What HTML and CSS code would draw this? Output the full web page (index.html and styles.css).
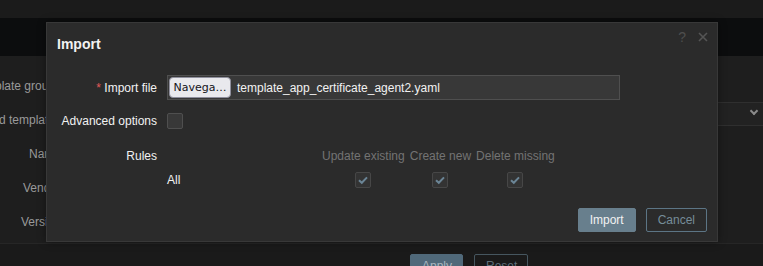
FILE: index.html
```html
<!DOCTYPE html>
<html lang="pt">
<head>
  <meta charset="UTF-8" />
  <title>Templates – Import</title>
  <link rel="stylesheet" href="styles.css">
</head>
<body>

  <div class="topbar"></div>
  <div class="navbar"></div>

  <!-- formulario do template (fica atras do dialogo) -->
  <main class="page">
    <div class="row"><label>Template groups</label><div class="field"></div></div>
    <div class="row"><label>Linked templates</label><div class="field"><div class="select"><span class="chevron"></span></div></div></div>
    <div class="row"><label>Name</label><div class="field"></div></div>
    <div class="row"><label>Vendor</label><div class="field"></div></div>
    <div class="row"><label>Version</label><div class="field"></div></div>
  </main>

  <footer class="page-foot">
    <button class="btn">Apply</button>
    <button class="btn alt">Reset</button>
  </footer>

  <!-- Dialogo de importacao -->
  <div class="dialog">
    <div class="dialog-head">
      <h4>Import</h4>
      <div class="head-icons">
        <span class="help">?</span>
        <svg class="close" width="10" height="10" viewBox="0 0 10 10"><path d="M1 1L9 9M9 1L1 9" stroke="#555" stroke-width="1.6"/></svg>
      </div>
    </div>

    <div class="dialog-body">
      <div class="form-grid">
        <label><span class="req">*</span> Import file</label>
        <div class="file-input">
          <span class="file-btn">Navega…</span>
          <span class="file-name">template_app_certificate_agent2.yaml</span>
        </div>

        <label>Advanced options</label>
        <div class="check-cell"><span class="checkbox"></span></div>

        <label class="rules-label">Rules</label>
        <table class="rules">
          <tr>
            <th class="name-col"></th>
            <th>Update existing</th>
            <th>Create new</th>
            <th>Delete missing</th>
          </tr>
          <tr>
            <td class="rule-name">All</td>
            <td><span class="checkbox checked"><svg width="16" height="16" viewBox="0 0 16 16"><path d="M4 8.2L6.8 10.8L12 5.4" fill="none" stroke="#6b8596" stroke-width="2"/></svg></span></td>
            <td><span class="checkbox checked"><svg width="16" height="16" viewBox="0 0 16 16"><path d="M4 8.2L6.8 10.8L12 5.4" fill="none" stroke="#6b8596" stroke-width="2"/></svg></span></td>
            <td><span class="checkbox checked"><svg width="16" height="16" viewBox="0 0 16 16"><path d="M4 8.2L6.8 10.8L12 5.4" fill="none" stroke="#6b8596" stroke-width="2"/></svg></span></td>
          </tr>
        </table>
      </div>
    </div>

    <div class="dialog-foot">
      <button class="btn">Import</button>
      <button class="btn alt">Cancel</button>
    </div>
  </div>

</body>
</html>
```

FILE: styles.css
```css
* {
  box-sizing: border-box;
}
body {
  margin: 0;
  width: 763px;
  height: 266px;
  overflow: hidden;
  position: relative;
  background: #1e1e1e;
  font-family: 'Liberation Sans', Arial, sans-serif;
  font-size: 12px;
  color: #f2f2f2;
}
.topbar {
  height: 18px;
  background: #1b1b1b;
}
.navbar {
  height: 38px;
  background: #0c0d0e;
}
.page {
  height: 187px;
  padding-top: 18px;
  display: flex;
  flex-direction: column;
  gap: 10px;
}
.row {
  display: flex;
  height: 24px;
  align-items: center;
}
.row label {
  width: 61px;
  flex-shrink: 0;
  text-align: right;
  white-space: nowrap;
  direction: rtl;
  color: #9a9a9a;
}
.row .field {
  flex: 1;
  height: 100%;
  display: flex;
  justify-content: flex-end;
}
.select {
  width: 300px;
  height: 24px;
  margin-top: -6px;
  background: #222;
  border-top: 1px solid #2f2f2f;
  border-bottom: 1px solid #2f2f2f;
  position: relative;
}
.chevron {
  position: absolute;
  right: 6px;
  top: 5px;
  width: 6px;
  height: 6px;
  border-right: 2px solid #8a8a8a;
  border-bottom: 2px solid #8a8a8a;
  transform: rotate(45deg);
}
.page-foot {
  height: 23px;
  border-top: 1px solid #262626;
  background: #1a1a1a;
  padding: 10px 0 0 410px;
  display: flex;
  gap: 11px;
}
.page-foot .btn {
  background: #50697a;
  border-color: #50697a;
  color: #a9b6bf;
  width: 53px;
}
.page-foot .btn.alt {
  background: transparent;
  border-color: #46565f;
  color: #5e6f7a;
  width: 54px;
}

/* dialogo */
.dialog {
  position: absolute;
  left: 46px;
  top: 22px;
  width: 672px;
  height: 220px;
  background: #2b2b2b;
  border: 1px solid #383838;
  box-shadow: 0 0 8px rgba(0,0,0,0.4);
  display: flex;
  flex-direction: column;
}
.dialog-head {
  padding: 10px 10px;
  position: relative;
}
.dialog-head h4 {
  margin: 0;
  font-size: 14px;
  font-weight: bold;
  line-height: 22px;
  color: #f2f2f2;
}
.head-icons {
  position: absolute;
  top: 8px;
  right: 9px;
  display: flex;
  align-items: center;
  gap: 12px;
}
.help {
  font-size: 14px;
  line-height: 12px;
  color: #4e4e4e;
}
.dialog-body {
  padding: 10px 10px 0;
}
.form-grid {
  display: grid;
  grid-template-columns: 100px 1fr;
  column-gap: 10px;
  row-gap: 10px;
  align-items: center;
}
.form-grid > label {
  text-align: right;
  white-space: nowrap;
}
.req {
  color: #e45959;
}
.file-input {
  width: 453px;
  height: 25px;
  background: #383838;
  border: 1px solid #4f4f4f;
  display: flex;
  align-items: center;
  padding-left: 1px;
}
.file-btn {
  height: 21px;
  width: 62px;
  background: #e9e9ed;
  border: 1px solid #8f8f9d;
  border-radius: 4px;
  font-family: 'DejaVu Sans', sans-serif;
  font-size: 11px;
  color: #15141a;
  display: flex;
  align-items: center;
  justify-content: center;
}
.file-name {
  margin-left: 6px;
}
.check-cell {
  height: 22px;
  display: flex;
  align-items: center;
}
.checkbox {
  display: inline-block;
  width: 16px;
  height: 16px;
  background: #383838;
  border: 1px solid #4f4f4f;
  border-radius: 2px;
  position: relative;
}
.checkbox.checked {
  background: #333;
  border-color: #474747;
}
.checkbox svg {
  position: absolute;
  left: -1px;
  top: -1px;
}
.rules-label {
  align-self: start;
  line-height: 20px;
  margin-top: 4px;
}
.rules {
  justify-self: start;
  width: auto;
  margin-top: 4px;
  border-collapse: collapse;
}
.rules th {
  font-weight: normal;
  color: #737373;
  line-height: 20px;
  padding: 0 5px 0 0;
  text-align: left;
  white-space: nowrap;
}
.rules th.name-col {
  width: 155px;
  padding: 0;
}
.rules td {
  height: 26px;
  padding: 2px 5px 0 0;
  text-align: center;
  vertical-align: middle;
}
.rules td .checkbox {
  vertical-align: middle;
}
.rules td.rule-name {
  text-align: left;
  padding-right: 0;
}
.dialog-foot {
  margin-top: auto;
  padding: 0 10px 9px;
  display: flex;
  justify-content: flex-end;
  gap: 10px;
}
.btn {
  height: 24px;
  padding: 0 11px;
  font-family: 'Liberation Sans', Arial, sans-serif;
  font-size: 12px;
  background: #687f8d;
  border: 1px solid #687f8d;
  border-radius: 2px;
  color: #f2f2f2;
}
.btn.alt {
  background: transparent;
  border-color: #5c7585;
  color: #768d99;
}
```
